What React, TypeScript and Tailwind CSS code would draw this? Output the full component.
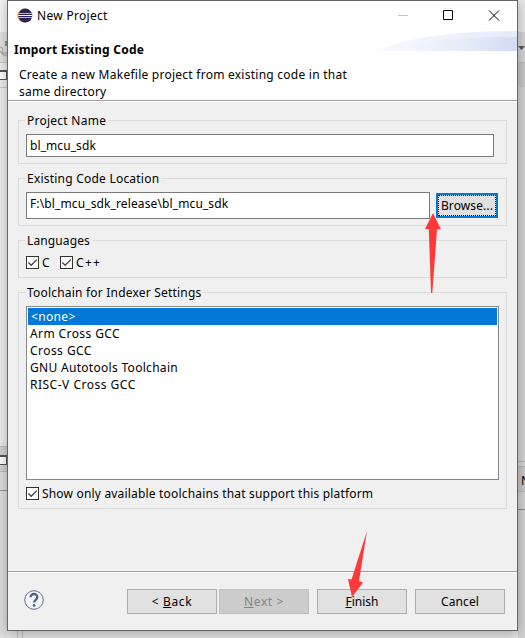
import type { ReactNode } from 'react';

function Group({ label, className, labelClass, children }: { label: string; className: string; labelClass: string; children: ReactNode }) {
  return (
    <fieldset className={`relative min-w-0 border border-[#dcdcdc] ${className}`}>
      <span className={`absolute -top-[9px] left-[6px] h-[18px] whitespace-nowrap bg-[#f0f0f0] pr-[2px] pl-[2px] leading-[18px] ${labelClass}`}>{label}</span>
      {children}
    </fieldset>
  );
}

function Check({ label, className }: { label: string; className: string }) {
  return (
    <label className="flex h-[13px] items-center gap-[3px] whitespace-nowrap">
      <span className="h-[13px] w-[13px] shrink-0 border border-[#333] bg-white">
        <svg viewBox="0 0 11 11" className="block h-[11px] w-[11px]"><path d="M1.4 5.5 4.2 8.3 9.8 2.6" fill="none" stroke="#444" strokeWidth="1.3" /></svg>
      </span>
      <span className={className}>{label}</span>
    </label>
  );
}

function Button({ children, className }: { children: ReactNode; className: string }) {
  return <button className={`h-[25px] w-[90px] shrink-0 border pt-[1px] text-center leading-[22px] whitespace-pre ${className}`}>{children}</button>;
}

const toolchains = [
  { name: '<none>', cls: 'bg-[#0078d7] text-white pl-[3px] tracking-[0.35px]' },
  { name: 'Arm Cross GCC', cls: 'pl-[2px] tracking-[0.4px]' },
  { name: 'Cross GCC', cls: 'pl-[2px] tracking-[0.45px]' },
  { name: 'GNU Autotools Toolchain', cls: 'pl-[2px] tracking-[0.3px]' },
  { name: 'RISC-V Cross GCC', cls: 'pl-[2px] tracking-[0.5px]' },
];

export default function App() {
  return (
    <div className="relative flex h-[638px] w-[525px] overflow-hidden bg-[#e4e4e4] font-['Noto_Sans','Open_Sans',sans-serif] text-[12px] text-black">
      {/* Workbench strip left of the dialog */}
      <div className="flex w-[7px] shrink-0 flex-col">
        <div className="h-8 bg-[#f5f5f5]" />
        <div className="h-[30px] bg-[#e2e2e2]">
          <svg viewBox="0 0 7 30" className="h-[30px] w-[7px]"><path d="M5 9h3v5H5z" fill="#7f9d86" /><path d="M0 15c3 0 3 3 2 6h5M0 19l3 4h4" fill="none" stroke="#aaa18a" /></svg>
        </div>
        <div className="h-[26px] border-y border-[#c9c9c9] bg-[#eee] pt-[7px]"><div className="h-[10px] w-[7px] border border-l-0 border-[#555] border-t-2 bg-white" /></div>
        <div className="h-[354px] bg-[#f0f0f0]" />
        <div className="h-[5px] border-b border-[#bbb] bg-[#eaeaea]" />
        <div className="h-[25px] border-b border-[#bbb] bg-[#d2d2d2] pt-[8px]"><div className="h-[10px] w-[7px] border border-l-0 border-[#555] border-t-2 bg-white" /></div>
        <div className="h-[19px] border-b border-[#999] bg-[#dedede]" />
        <div className="grow bg-[#dfdfdf]" />
      </div>

      <div className="flex w-[511px] shrink-0 flex-col">
        <main className="z-10 flex h-[631px] shrink-0 flex-col border border-[#666] bg-[#f0f0f0] shadow-[0_2px_12px_rgba(0,0,0,0.3)]">
          <header className="flex h-[100px] shrink-0 flex-col border-b border-[#a0a0a0] bg-white">
            <div className="flex h-[30px] shrink-0 items-center pl-[9px]">
              <svg viewBox="0 0 16 16" className="h-4 w-4"><circle cx="7.3" cy="7.6" r="7" fill="#f4a040" /><circle cx="8.3" cy="7.6" r="7" fill="#2c2255" /><path d="M1.3 5.5h14M1.3 7.5h14M1.3 9.5h14" stroke="#b7b2d0" /><path d="M1.3 7.5h14" stroke="#fff" /></svg>
              <span className="ml-[4px] grow tracking-[0.3px]">New Project</span>
              <svg viewBox="0 0 120 30" className="mr-[7px] h-[30px] w-[120px]"><path d="M8 14.500h10" stroke="#c4c4c4" /><path d="M53.500 9.500h9v9h-9z" fill="none" stroke="#000" /><path d="m99 9.500 10 10m0-10-10 10" stroke="#000" /></svg>
            </div>
            <div className="flex h-5 shrink-0 justify-between">
              <h1 className="mt-[9px] ml-[6px] h-[20px] leading-[20px] font-bold tracking-[0.22px] whitespace-nowrap">Import Existing Code</h1>
              <svg viewBox="0 0 142 20" className="h-5 w-[142px]">
                <defs><linearGradient id="sweep"><stop offset="0" stopColor="#f9fafe" /><stop offset=".5" stopColor="#eaeff9" /><stop offset="1" stopColor="#d2dcf4" /></linearGradient><linearGradient id="glow"><stop offset="0" stopColor="#f7f9fd" /><stop offset="1" stopColor="#e3eaf8" /></linearGradient></defs>
                <path d="M2 20C32 5 90 0 142 0v20z" fill="url(#glow)" /><path d="M2 20C40 10 95 6 142 6v14z" fill="url(#sweep)" />
              </svg>
            </div>
            <p className="mt-[15px] ml-[11px] leading-[17px] tracking-[0.25px] whitespace-nowrap">Create a new Makefile project from existing code in that<br />same directory</p>
          </header>

          <section className="flex h-[470px] shrink-0 flex-col border-t border-white px-[10px] pt-[18px]">
            <Group label="Project Name" className="h-[44px] pt-[13px] pl-[7px]" labelClass="tracking-[0.25px]">
              <div className="h-[23px] w-[468px] border border-[#7a7a7a] bg-white pl-[3px] leading-[21px] tracking-[0.08px]">bl_mcu_sdk</div>
            </Group>
            <Group label="Existing Code Location" className="mt-[14px] flex h-[48px] pt-[13px] pl-[7px]" labelClass="tracking-[0.22px]">
              <div className="flex">
                <div className="h-[27px] w-[404px] border border-[#7a7a7a] bg-white pl-[3px] leading-[22px] tracking-[0.12px]">F:\bl_mcu_sdk_release\bl_mcu_sdk</div>
                <button className="mt-[1px] ml-[6px] h-[25px] w-[62px] border-2 border-[#0078d7] bg-[#e1e1e1]"><span className="block h-[21px] border border-dotted border-black leading-[20px] tracking-[0.1px]">Browse...</span></button>
              </div>
            </Group>
            <Group label="Languages" className="mt-[14px] h-[38px] pt-[15px] pl-[7px]" labelClass="tracking-[0.12px]">
              <div className="flex"><div className="w-[34px]"><Check label="C" className="" /></div><Check label="C++" className="tracking-[1.3px]" /></div>
            </Group>
            <Group label="Toolchain for Indexer Settings" className="mt-[14px] h-[217px] pt-[13px] pl-[7px]" labelClass="tracking-[0.2px]">
              <ul className="mb-[7px] h-[174px] w-[473px] border border-[#828790] bg-white p-px">
                {toolchains.map((t) => <li key={t.name} className={`h-[17px] leading-[17px] ${t.cls}`}>{t.name}</li>)}
              </ul>
              <Check label="Show only available toolchains that support this platform" className="tracking-[0.18px]" />
            </Group>
          </section>

          <footer className="flex grow items-start border-t border-[#a0a0a0] shadow-[inset_0_1px_white] pt-[17px] pl-[16px]">
            <svg viewBox="0 0 20 20" className="mt-[1px] h-5 w-5"><circle cx="10" cy="10" r="9.300" fill="#f5f5f7" stroke="#60708f" /><path d="M6.600 7.200C6.500 3 13.500 3 13.300 7.300c0 2.500-3.200 2.600-3.200 5.200" fill="none" stroke="#52648b" strokeWidth="2.400" /><circle cx="10.100" cy="15.500" r="1.400" fill="#52648b" /></svg>
            <Button className="ml-[83px] border-[#adadad] bg-[#e1e1e1] tracking-[0.6px]">&lt; <u>B</u>ack</Button>
            <Button className="ml-[2px] border-[#bfbfbf] bg-[#ccc] text-[#838383] tracking-[0.6px]"><u>N</u>ext &gt;</Button>
            <Button className="ml-[8px] border-[#adadad] bg-[#e1e1e1]"><u>F</u>inish</Button>
            <Button className="ml-[8px] border-[#adadad] bg-[#e1e1e1] tracking-[0.1px]">Cancel</Button>
          </footer>
        </main>
        <div className="ml-[10px] w-[6px] grow border-x border-[#c5c5c5]" />
      </div>

      {/* Workbench strip right of the dialog */}
      <div className="flex w-[7px] shrink-0 flex-col">
        <div className="h-8 bg-[#e8e8e8]" />
        <div className="h-[31px] border-b border-[#bbb] bg-[#d5d5d5] pt-[14px]"><svg viewBox="0 0 7 4" className="block h-1 w-[7px]"><path d="M0 0h7L3.500 4z" fill="#555" /></svg></div>
        <div className="h-6 bg-[#c8c8c8]" />
        <div className="h-[375px] border-b border-[#b5b5b5] bg-[#d3d3d3]" />
        <div className="h-[5px] border-b border-[#bbb] bg-[#d5d5d5]" />
        <div className="h-[25px] overflow-hidden border-b border-[#bbb] bg-[#c8c8c8] pl-[3px] leading-[27px]">N</div>
        <div className="h-[18px] border-b border-[#888] bg-[#d2d2d2]" />
        <div className="grow bg-[#d1d1d1]" />
      </div>

      <svg viewBox="0 0 525 638" className="pointer-events-none absolute inset-0 z-20 h-[638px] w-[525px]">
        <path d="M433 213 441 229.500 437 229 432.300 293 431 293 428.800 229 425 229z" fill="#ff3838" />
        <path d="M352 597 348 579 351.500 579.500 367 531 359 581 363 582.500z" fill="#ff3838" />
      </svg>
    </div>
  );
}
